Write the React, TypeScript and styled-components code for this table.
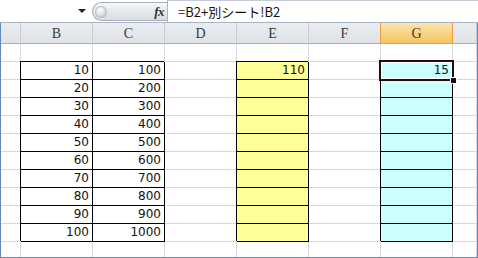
import React from 'react';
import styled, { createGlobalStyle, css } from 'styled-components';

const GlobalStyle = createGlobalStyle`
  html, body {
    margin: 0;
    padding: 0;
    background: #ffffff;
  }
  body {
    font-family: "Liberation Sans", Arial, sans-serif;
  }
`;

// ---------------------------------------------------------------------------
// Layout
// ---------------------------------------------------------------------------

const Window = styled.div`
  width: 478px;
  height: 258px;
  overflow: hidden;
  display: flex;
  flex-direction: column;
  background: #ffffff;
`;

const FormulaBar = styled.div`
  flex: none;
  display: flex;
  height: 23px;
  box-sizing: border-box;
  border-bottom: 1px solid #aab5c3;
  background: #ffffff;
`;

const NameBox = styled.div`
  width: 92px;
  flex: none;
  display: flex;
  align-items: center;
  justify-content: flex-end;
  padding-right: 6px;
  box-sizing: border-box;
`;

const DropArrow = styled.span`
  width: 0;
  height: 0;
  border-left: 4px solid transparent;
  border-right: 4px solid transparent;
  border-top: 4px solid #222;
`;

const FxPill = styled.div`
  width: 75px;
  flex: none;
  margin: 2px 0 1px;
  box-sizing: border-box;
  border: 1px solid #a8afba;
  border-right: none;
  border-radius: 10px 0 0 10px;
  background: linear-gradient(#f7f8fa, #e4e7eb 55%, #d9dde3);
  display: flex;
  align-items: center;
  justify-content: space-between;
  padding: 0 3px 0 2px;
`;

const Knob = styled.span`
  width: 12px;
  height: 12px;
  border-radius: 50%;
  background: radial-gradient(circle at 40% 35%, #ffffff, #d4d8de 55%, #a9b0ba);
  box-shadow: inset 0 0 0 1px #b9bfc8;
`;

const FxLabel = styled.span`
  font-family: "Liberation Serif", "Times New Roman", serif;
  font-style: italic;
  font-weight: bold;
  font-size: 13px;
  color: #333;
  letter-spacing: -0.5px;
`;

const FormulaInput = styled.div`
  flex: 1;
  display: flex;
  align-items: center;
  padding-left: 10px;
  border-left: 1px solid #aab5c3;
  border-top: 1px solid #c3ccd8;
  font-family: "Noto Sans CJK JP", "Liberation Sans", sans-serif;
  font-size: 13px;
  color: #111;
`;

const Sheet = styled.div`
  flex: 1;
  min-height: 0;
  overflow: hidden;
  border: 1px solid #6288c4;
  border-top: none;
  display: grid;
  grid-template-columns: 20px repeat(6, 72px) 1fr;
  grid-template-rows: 21px;
  grid-auto-rows: 18px;
  align-content: start;
`;

const ColHeader = styled.div<{ $active?: boolean }>`
  box-sizing: border-box;
  display: flex;
  align-items: center;
  justify-content: center;
  padding-top: 2px;
  font-family: "Liberation Serif", "Times New Roman", serif;
  font-size: 14px;
  color: #3a3a3a;
  border-right: 1px solid #c5ccd5;
  border-bottom: 1px solid #9fb1c7;
  background: linear-gradient(#e9ecf0, #dfe3e8);
  ${({ $active }) =>
    $active &&
    css`
      background: linear-gradient(#fbe4ab, #f8d27f 60%, #f3c465);
      border-right-color: #f29b38;
      border-bottom-color: #f29b38;
      box-shadow: -1px 0 0 #f29b38;
    `}
`;

const Cell = styled.div<{ $fill?: string; $boxed?: boolean }>`
  position: relative;
  box-sizing: border-box;
  display: flex;
  align-items: flex-end;
  justify-content: flex-end;
  padding: 0 3px 2px 0;
  font-family: "DejaVu Sans", "Liberation Sans", sans-serif;
  font-size: 12px;
  line-height: 14px;
  color: #111;
  background: ${({ $fill }) => $fill || '#ffffff'};
  border-right: 1px solid ${({ $boxed }) => ($boxed ? '#000' : '#d6d8dc')};
  border-bottom: 1px solid ${({ $boxed }) => ($boxed ? '#000' : '#d6d8dc')};
  ${({ $boxed }) =>
    $boxed &&
    css`
      box-shadow: -1px -1px 0 #000;
    `}
`;

// selection frame around the active cell
const ActiveFrame = styled.span`
  position: absolute;
  left: -2px;
  top: -2px;
  right: -2px;
  bottom: -2px;
  border: 2px solid #2a0b0b;
  box-shadow: inset 0 0 0 1px #ffffff;
  z-index: 2;
  pointer-events: none;
`;

const FillHandle = styled.span`
  position: absolute;
  right: -4px;
  bottom: -4px;
  width: 5px;
  height: 5px;
  background: #111;
  box-shadow: 0 0 0 1px #ffffff;
  z-index: 3;
`;

// ---------------------------------------------------------------------------
// Data
// ---------------------------------------------------------------------------

const COLUMNS = ['', 'B', 'C', 'D', 'E', 'F', 'G', ''];
const ACTIVE_COL = 'G';
const YELLOW = '#ffff99';
const CYAN = '#ccffff';

type CellSpec = { value?: string | number; fill?: string; boxed?: boolean; active?: boolean };

const buildRow = (row: number): CellSpec[] => {
  const inTable = row >= 2 && row <= 11;
  const i = row - 1;
  return COLUMNS.map((col) => {
    if (!inTable) return {};
    switch (col) {
      case 'B':
        return { value: i * 10, boxed: true };
      case 'C':
        return { value: i * 100, boxed: true };
      case 'E':
        return { value: row === 2 ? 110 : undefined, fill: YELLOW, boxed: true };
      case 'G':
        return { value: row === 2 ? 15 : undefined, fill: CYAN, boxed: true, active: row === 2 };
      default:
        return {};
    }
  });
};

const ROWS = Array.from({ length: 12 }, (_, r) => buildRow(r + 1));

export default function App() {
  return (
    <>
      <GlobalStyle />
      <Window>
        <FormulaBar>
          <NameBox>
            <DropArrow />
          </NameBox>
          <FxPill>
            <Knob />
            <FxLabel>fx</FxLabel>
          </FxPill>
          <FormulaInput>=B2+別シート!B2</FormulaInput>
        </FormulaBar>

        <Sheet>
          {COLUMNS.map((col, c) => (
            <ColHeader key={`h${c}`} $active={col === ACTIVE_COL}>
              {col}
            </ColHeader>
          ))}
          {ROWS.map((cells, r) =>
            cells.map((cell, c) => (
              <Cell key={`${r}-${c}`} $fill={cell.fill} $boxed={cell.boxed}>
                {cell.value}
                {cell.active && (
                  <>
                    <ActiveFrame />
                    <FillHandle />
                  </>
                )}
              </Cell>
            ))
          )}
        </Sheet>
      </Window>
    </>
  );
}
